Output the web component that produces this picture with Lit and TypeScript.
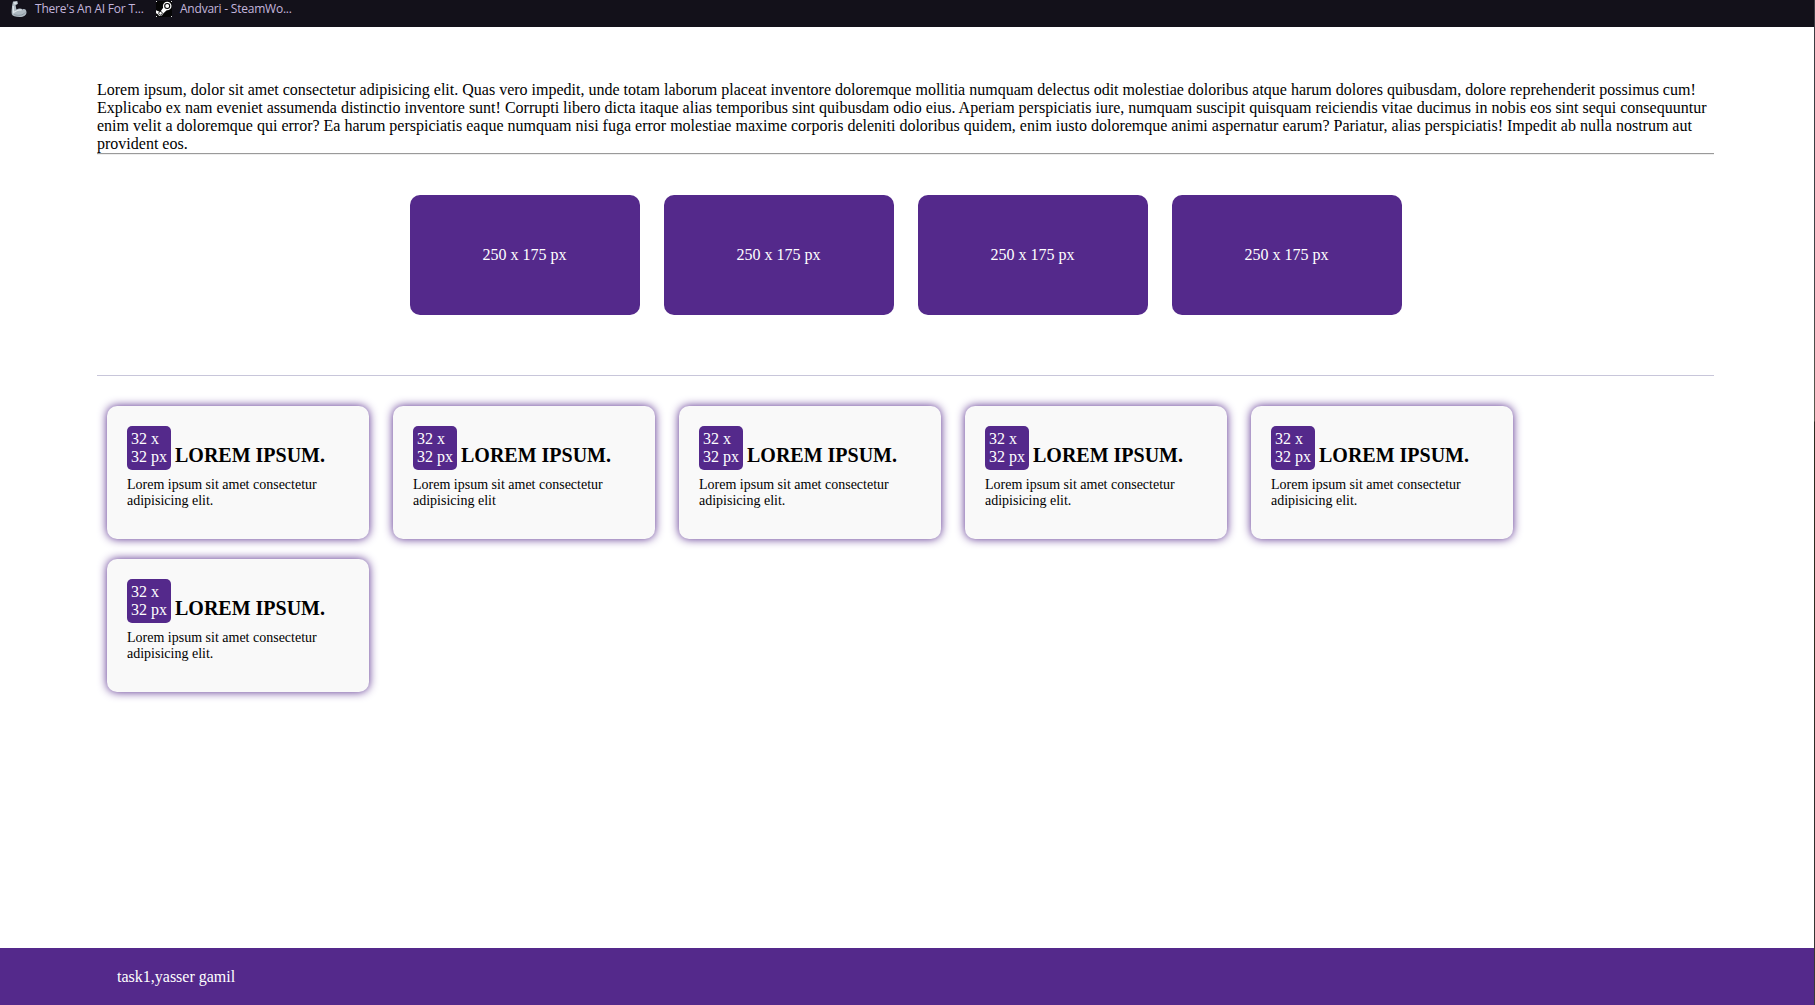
import { LitElement, html, css, svg } from "lit";
import { customElement, property } from "lit/decorators.js";

@customElement("info-card")
class InfoCard extends LitElement {
  @property() text = "";
  static styles = css`
    :host { display: block; box-sizing: border-box; width: 262px; height: 133px; padding: 20px; border-radius: 10px; background: #f9f9f9; box-shadow: 0 0 10px #54298b; }
    .head { display: flex; align-items: flex-start; gap: 4px; height: 44px; }
    .badge { box-sizing: border-box; width: 44px; height: 44px; padding: 4px; border-radius: 5px; background: #54298b; color: #fff; font-size: 16px; line-height: 18px; white-space: nowrap; }
    .title { margin: 18px 0 0; font-size: 20px; line-height: 23px; font-weight: bold; white-space: nowrap; }
    .text { margin: 7px 0 0; width: 200px; font-size: 14px; line-height: 16px; }
  `;
  render() {
    return html`
      <div class="head">
        <div class="badge">32 x<br />32 px</div>
        <h2 class="title">LOREM IPSUM.</h2>
      </div>
      <p class="text">${this.text}</p>
    `;
  }
}

const arm = svg`
  <path d="M2 .6 6.3 0 7 2.8 4.6 4.2 5.4 8.6C7.6 7.2 10 6.9 11.6 8.4c1.6-1.2 3.9 0 3.9 2.8 0 3-2.6 4.8-6.8 4.8-4.5 0-7.1-1-7.9-2.8C.2 10.9 1 6.600 1.200 4z" fill="#aeb9c1"/>
  <path d="M2.300 1.200 5.600.7 6 2.400 3.600 3.500z" fill="#d9e1e6"/>
  <path d="M2.200 5 2.600 11.500C5 10 8 8.200 10.500 9.200" fill="none" stroke="#dfe6ea" stroke-width="1.300"/>
  <path d="M3.300 13.500C7 15 12 14.500 14.300 11.500" fill="none" stroke="#87949d" stroke-width="1"/>`;

const steam = svg`
  <rect width="16" height="16" fill="#050505"/>
  <path d="M0 9.300 4.200 11 8 5.500 11.500 8.500 7.500 12.300 6 14.600 3.200 15 1.500 13 0 12.300z" fill="#fff"/>
  <circle cx="11.200" cy="5" r="4.300" fill="#fff"/>
  <circle cx="11.200" cy="5" r="2.500" fill="#fff" stroke="#050505" stroke-width="1.100"/>
  <circle cx="4.500" cy="12.300" r="1.800" fill="none" stroke="#050505" stroke-width=".8"/>
  <path d="M0 0h1v1H0zM15 0h1v1h-1zM0 15h1v1H0zM15 15h1v1h-1z" fill="#ddd"/>`;

const copy =
  "Lorem ipsum, dolor sit amet consectetur adipisicing elit. Quas vero impedit, unde totam laborum placeat inventore doloremque mollitia numquam delectus odit molestiae doloribus atque harum dolores quibusdam, dolore reprehenderit possimus cum! Explicabo ex nam eveniet assumenda distinctio inventore sunt! Corrupti libero dicta itaque alias temporibus sint quibusdam odio eius. Aperiam perspiciatis iure, numquam suscipit quisquam reiciendis vitae ducimus in nobis eos sint sequi consequuntur enim velit a doloremque qui error? Ea harum perspiciatis eaque numquam nisi fuga error molestiae maxime corporis deleniti doloribus quidem, enim iusto doloremque animi aspernatur earum? Pariatur, alias perspiciatis! Impedit ab nulla nostrum aut provident eos.";

const full = "Lorem ipsum sit amet consectetur adipisicing elit.";
const cards = [full, "Lorem ipsum sit amet consectetur adipisicing elit", full, full, full, full];

@customElement("app-root")
class AppRoot extends LitElement {
  static styles = css`
    :host { display: flex; width: 1815px; height: 1005px; overflow: hidden; background: #fff; color: #000; font-family: "Liberation Serif", "Times New Roman", serif; font-size: 16px; line-height: 18px; }
    .page { display: flex; flex-direction: column; width: 1814px; height: 1005px; }
    .edge { width: 1px; height: 1005px; background: linear-gradient(#3c3c42 0, #3b3f44 150px, #46474a 300px, #5c5b50 421px, #2b2a20 422px, #2f2d22 650px, #2e2c2b 800px, #3b3b3b 1005px); }
    .bar { display: flex; box-sizing: border-box; height: 27px; padding: 1px 0 0 11px; background: #13111a; color: #c3b5dc; font-family: "Open Sans", "Noto Sans", sans-serif; font-size: 12px; line-height: 16px; }
    .mark { display: flex; align-items: flex-start; height: 16px; white-space: nowrap; }
    .first { width: 145px; }
    .icon { display: block; width: 16px; height: 16px; margin-right: 8px; }
    .name { letter-spacing: -0.22px; }
    .content { display: flex; flex-direction: column; width: 1617px; margin-left: 97px; padding-top: 54px; }
    .copy { margin: 0; height: 72px; }
    .rule { height: 1px; background: #9a9a9a; border-bottom: 1px solid #eee; }
    .boxes { display: flex; justify-content: center; gap: 24px; padding: 40px 0 60px 1px; }
    .box { box-sizing: border-box; display: flex; align-items: center; justify-content: center; width: 230px; height: 120px; padding-right: 1px; border-radius: 10px; background: #54298b; color: #fff; }
    .line { height: 1px; background: #c8c6da; }
    .cards { display: flex; flex-wrap: wrap; gap: 20px 24px; padding: 30px 10px 0; }
    .foot { display: flex; align-items: center; height: 57px; margin-top: auto; padding-left: 117px; background: #54298b; color: #fff; }
  `;
  render() {
    return html`
      <div class="page">
        <nav class="bar">
          <div class="mark first"><svg class="icon" viewBox="0 0 16 16">${arm}</svg><span class="name">There's An AI For T...</span></div>
          <div class="mark"><svg class="icon" viewBox="0 0 16 16">${steam}</svg><span class="name">Andvari - SteamWo...</span></div>
        </nav>
        <main class="content">
          <p class="copy">${copy}</p>
          <div class="rule"></div>
          <section class="boxes">${[1, 2, 3, 4].map(() => html`<div class="box">250 x 175 px</div>`)}</section>
          <div class="line"></div>
          <section class="cards">${cards.map((t) => html`<info-card .text=${t}></info-card>`)}</section>
        </main>
        <footer class="foot">task1,yasser gamil</footer>
      </div>
      <div class="edge"></div>
    `;
  }
}
